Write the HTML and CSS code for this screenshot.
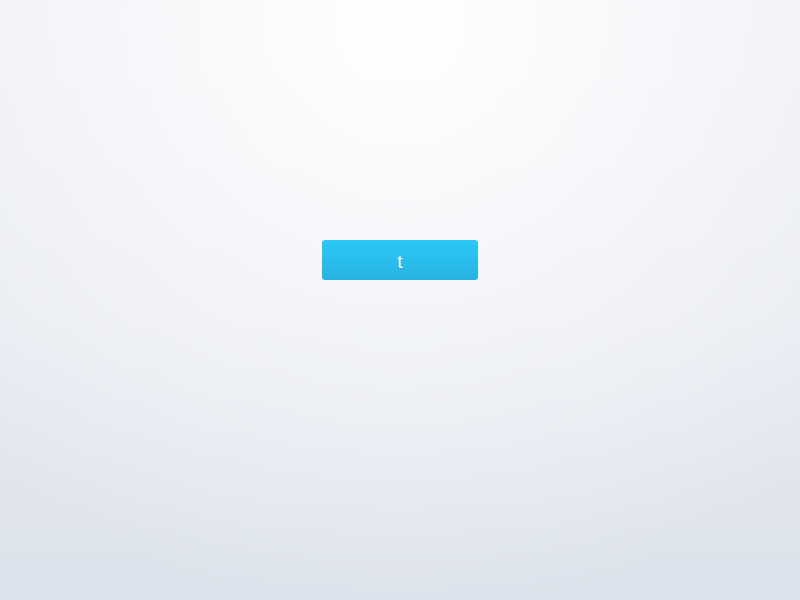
FILE: index.html
```html
<!DOCTYPE html>
<html>
<head>
<meta charset="utf-8">
<link rel="stylesheet" href="styles.css">
</head>
<body>
<main class="stage">
  <button class="btn" type="button">t</button>
</main>
</body>
</html>
```
FILE: styles.css
```css
html, body {
  margin: 0;
  padding: 0;
  height: 100%;
}
body {
  background:
    radial-gradient(ellipse 620px 600px at 400px 20px, rgba(255,255,255,1) 0%, rgba(255,255,255,0.55) 45%, rgba(255,255,255,0) 100%),
    linear-gradient(to bottom, #eceef4 0%, #e7eaf1 55%, #dce2eb 100%);
  font-family: "Liberation Sans", Arial, sans-serif;
}
.stage {
  box-sizing: border-box;
  height: 100%;
  padding-top: 240px;
  display: flex;
  align-items: flex-start;
  justify-content: center;
}
.btn {
  box-sizing: border-box;
  width: 156px;
  height: 40px;
  border: 0;
  border-radius: 3px;
  background: linear-gradient(to bottom, #2dc7f7 0%, #27b4e2 100%);
  color: #ffffff;
  font-family: "Liberation Sans", Arial, sans-serif;
  font-size: 19px;
  line-height: 38px;
  padding: 3px 0 0;
  text-shadow: 0 1px 1px rgba(0,0,0,0.12);
  cursor: pointer;
}
```
